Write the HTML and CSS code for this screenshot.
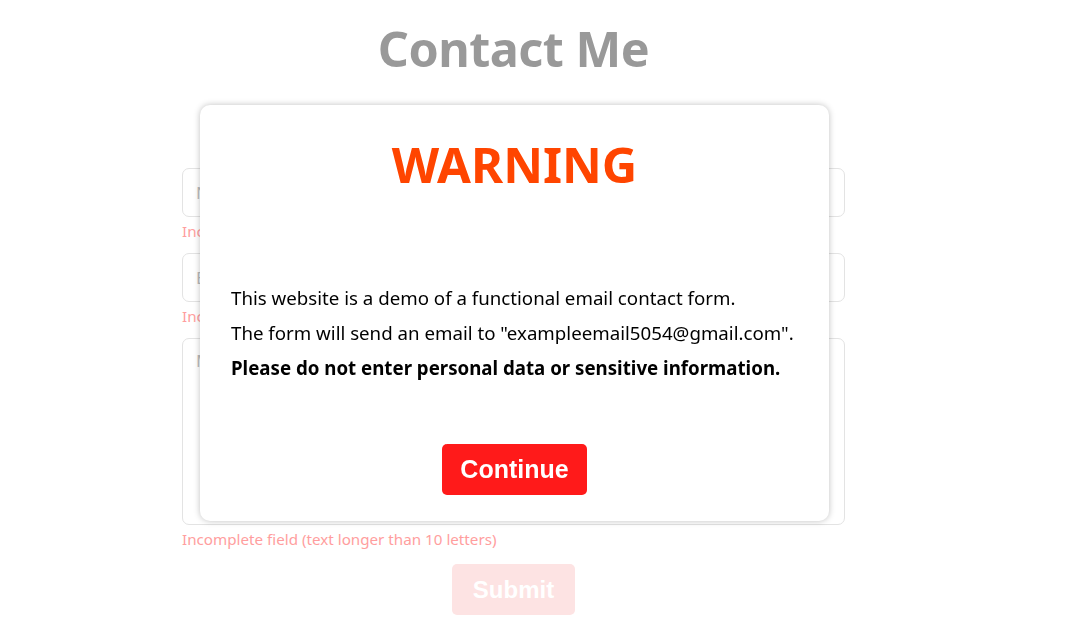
FILE: index.html
```html
<!DOCTYPE html>
<html lang="en">
<head>
<meta charset="utf-8">
<title>Contact Me</title>
<link rel="stylesheet" href="styles.css">
</head>
<body>
<main class="page">
  <h1 class="title">Contact Me</h1>
  <form class="form">
    <div class="field">
      <input class="input" type="text" placeholder="Name">
      <p class="error">Incomplete field</p>
    </div>
    <div class="field">
      <input class="input" type="text" placeholder="Email">
      <p class="error">Incomplete field</p>
    </div>
    <div class="field">
      <textarea class="input textarea" placeholder="Message"></textarea>
      <p class="error">Incomplete field (text longer than 10 letters)</p>
    </div>
    <div class="actions">
      <button class="submit" type="button" disabled>Submit</button>
    </div>
  </form>
</main>
<div class="modal">
  <h2 class="modal-title">WARNING</h2>
  <div class="modal-body">
    <p>This website is a demo of a functional email contact form.</p>
    <p>The form will send an email to "exampleemail5054@gmail.com".</p>
    <p class="strong">Please do not enter personal data or sensitive information.</p>
  </div>
  <div class="modal-actions">
    <button class="continue" type="button">Continue</button>
  </div>
</div>
</body>
</html>
```
FILE: styles.css
```css
* { box-sizing: border-box; }
html, body { margin: 0; padding: 0; background: #fff; }
body { font-family: "Noto Sans", "Open Sans", sans-serif; }

.page {
  width: 663px;
  margin-left: 182px;
  display: flex;
  flex-direction: column;
}
.title {
  margin: 14px 0 0;
  height: 154px;
  text-align: center;
  font-size: 48.5px;
  font-weight: 700;
  color: #999;
  line-height: 68px;
  letter-spacing: -0.5px;
}
.form { display: flex; flex-direction: column; }
.field { display: flex; flex-direction: column; }
.input {
  width: 100%;
  height: 49px;
  border: 1px solid #e3e3e3;
  border-radius: 7px;
  padding: 0 13px;
  font-family: inherit;
  font-size: 17px;
  color: #333;
  background: #fff;
  outline: none;
}
.input::placeholder { color: #bbb; }
.textarea { height: 187px; resize: none; padding-top: 10px; }
.error {
  margin: 0;
  height: 36px;
  padding-top: 4px;
  font-size: 15.2px;
  line-height: 20px;
  color: #ff9e9e;
}
.field:last-child .error { padding-top: 6px; }
.actions { display: flex; justify-content: center; margin-top: 3px; }
.submit {
  width: 123px;
  height: 51px;
  border: none;
  border-radius: 5px;
  background: #fde3e3;
  color: #fff;
  font-family: "Liberation Sans", Arial, sans-serif;
  font-weight: 700;
  font-size: 24px;
}

.modal {
  position: fixed;
  left: 200px;
  top: 105px;
  width: 629px;
  height: 416px;
  background: #fff;
  border-radius: 10px;
  box-shadow: 0 0 6px rgba(0,0,0,0.25);
  display: flex;
  flex-direction: column;
  padding: 0 31px;
}
.modal-title {
  margin: 24px 0 0;
  text-align: center;
  font-size: 49px;
  line-height: 70px;
  font-weight: 700;
  color: #ff4500;
}
.modal-body {
  margin-top: 81px;
  font-size: 18.7px;
  color: #000;
}
.modal-body p { margin: 0; line-height: 35px; }
.modal-body .strong { font-weight: 700; }
.modal-actions { display: flex; justify-content: center; margin-top: 59px; }
.continue {
  width: 145px;
  height: 51px;
  border: none;
  border-radius: 5px;
  background: #ff1a1a;
  color: #fff;
  font-family: "Liberation Sans", Arial, sans-serif;
  font-weight: 700;
  font-size: 25px;
}
```
